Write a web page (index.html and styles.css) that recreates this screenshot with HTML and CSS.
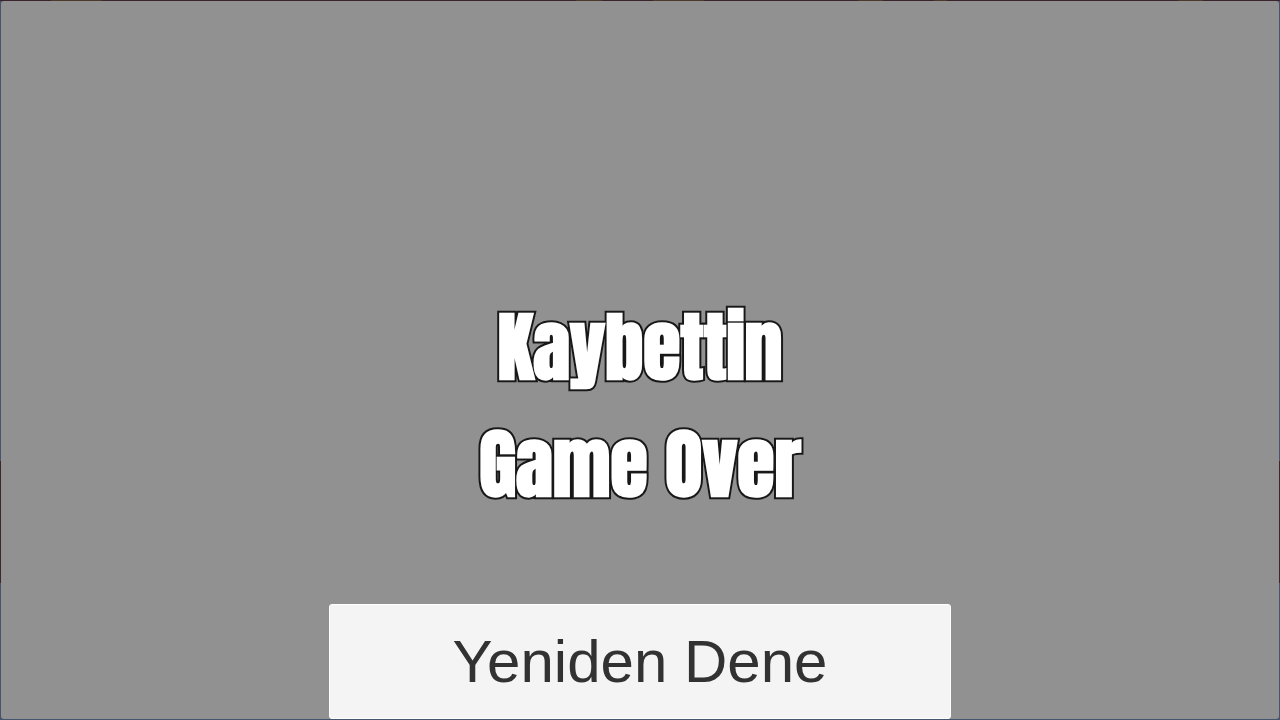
FILE: index.html
```html
<!DOCTYPE html>
<html lang="tr">
<head>
  <meta charset="UTF-8">
  <title>Game Over</title>
  <meta name="viewport" content="width=device-width, initial-scale=1.0">
  <link rel="stylesheet" href="styles.css">
</head>
<body>
  <main class="game-over">
    <h1 class="message">
      <span>Kaybettin</span>
      <span>Game Over</span>
    </h1>
    <button type="button" class="retry">Yeniden Dene</button>
  </main>
</body>
</html>
```
FILE: styles.css
```css
* {
  box-sizing: border-box;
}
/* The game scene shows around the edge of the panel */
body {
  margin: 0;
  padding: 1px;
  min-height: 100vh;
  display: flex;
  background:
    linear-gradient(90deg, transparent 4%, #4a3a2c 4% 8%, transparent 8% 45%, #4a3a2c 45% 47%, transparent 47% 51%, #4a3a2c 51% 55%, transparent 55% 67%, #4a3a2c 67% 69%, transparent 69% 73%, #4a3a2c 73% 74%, transparent 74% 92%, #4a3a2c 92% 94%, transparent 94%) top / 100% 1px no-repeat,
    linear-gradient(#3c222a, #3c222a) top / 100% 1px no-repeat,
    linear-gradient(#46546e 64%, #3c2828 64% 81%, #46546e 81%);
}
.game-over {
  flex: 1;
  display: flex;
  flex-direction: column;
  align-items: center;
  justify-content: flex-end;
  background: #919191;
  border-radius: 3px;
}
.message {
  margin: 0 0 81px;
  color: #fff;
  font-family: Anton, Impact, "Liberation Sans", sans-serif;
  font-size: 76px;
  font-weight: bold;
  line-height: 117px;
  text-align: center;
  -webkit-text-stroke: 4px #181818;
  paint-order: stroke fill;
}
.message span {
  display: block;
}
.retry {
  width: 622px;
  max-width: 100%;
  height: 115px;
  padding: 0;
  border: 1px solid #fff;
  border-radius: 3px;
  background: #f4f4f4;
  color: #323232;
  font-family: "Liberation Sans", Arial, sans-serif;
  font-size: 60px;
  cursor: pointer;
}
.retry:hover {
  background: #fff;
}
```
